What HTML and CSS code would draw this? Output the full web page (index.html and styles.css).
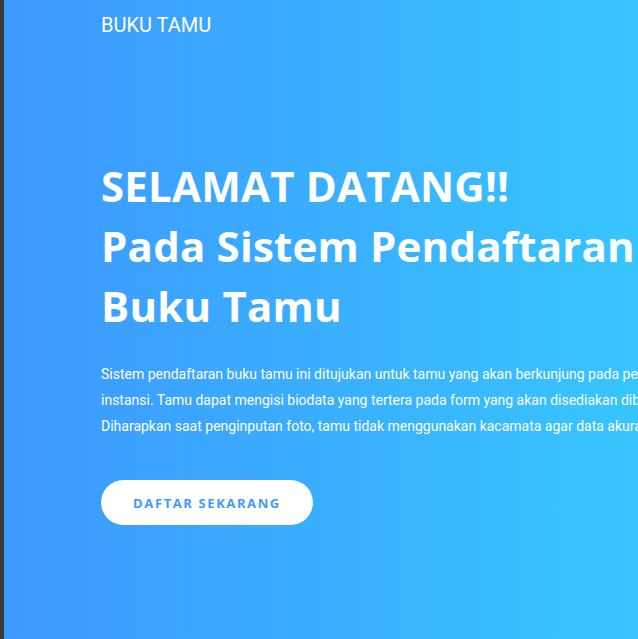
FILE: index.html
```html
<!DOCTYPE html>
<html lang="id">
<head>
<meta charset="utf-8">
<title>Buku Tamu</title>
<link rel="stylesheet" href="styles.css">
</head>
<body>
<div class="edge"></div>
<main class="hero">
  <nav class="navbar">
    <a class="brand" href="#">BUKU TAMU</a>
  </nav>
  <section class="intro">
    <h1 class="title">SELAMAT DATANG!!<br>Pada Sistem Pendaftaran<br>Buku Tamu</h1>
    <p class="lead">Sistem pendaftaran buku tamu ini ditujukan untuk tamu yang akan berkunjung pada perusahaan atau<br>instansi. Tamu dapat mengisi biodata yang tertera pada form yang akan disediakan dibawah ini.<br>Diharapkan saat penginputan foto, tamu tidak menggunakan kacamata agar data akurat.</p>
    <a class="btn" href="#">DAFTAR SEKARANG</a>
  </section>
</main>
</body>
</html>
```

FILE: styles.css
```css
html, body {
  margin: 0;
  padding: 0;
  height: 100%;
}
body {
  display: flex;
  overflow: hidden;
  background: #3a3b3d;
}
.edge {
  width: 4px;
  flex: none;
  background: #3a3b3d;
}
.hero {
  flex: 1;
  min-width: 0;
  overflow: hidden;
  background: linear-gradient(90deg, #3d98fe 0%, #37c5ff 100%);
  padding-left: 97px;
  color: #fff;
  font-family: Roboto, "Liberation Sans", sans-serif;
}
.navbar {
  height: 50px;
  display: flex;
  align-items: center;
}
.brand {
  color: #fff;
  text-decoration: none;
  font-size: 20px;
  line-height: 24px;
  margin-top: -1px;
}
.intro {
  width: 900px;
  padding-top: 106px;
}
.title {
  margin: 0;
  font-family: "Open Sans", "Liberation Sans", sans-serif;
  font-weight: 700;
  font-size: 42px;
  line-height: 60px;
  letter-spacing: 0.2px;
}
.lead {
  margin: 25px 0 0;
  font-size: 14px;
  line-height: 26px;
}
.btn {
  display: inline-flex;
  align-items: center;
  justify-content: center;
  margin-top: 41px;
  width: 212px;
  height: 45px;
  border-radius: 23px;
  background: #fff;
  color: #3f9afd;
  text-decoration: none;
  font-family: "Open Sans", "Liberation Sans", sans-serif;
  font-weight: 700;
  font-size: 13px;
  letter-spacing: 1.6px;
}
```
